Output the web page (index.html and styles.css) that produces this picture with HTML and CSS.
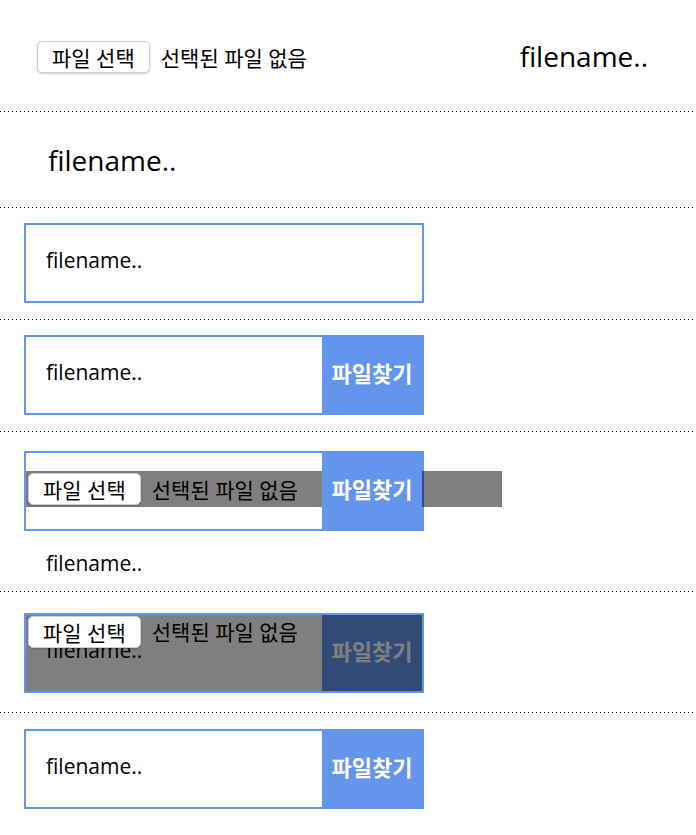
FILE: index.html
```html
<!DOCTYPE html>
<html lang="ko">
<head>
    <meta charset="UTF-8">
    <meta name="viewport" content="width=device-width, initial-scale=1.0">
    <title>File input</title>
    <link rel="stylesheet" href="styles.css">
</head>
<body>
    <!-- native input + name -->
    <div class="demo demo-native">
        <div class="file-field">
            <span class="file-btn">파일 선택</span>
            <span class="file-text">선택된 파일 없음</span>
        </div>
        <span class="filename filename-lg">filename..</span>
    </div>

    <div class="demo demo-text">
        <span class="filename filename-lg">filename..</span>
    </div>

    <div class="demo demo-box">
        <div class="filebox">
            <span class="filename">filename..</span>
        </div>
    </div>

    <div class="demo demo-box">
        <div class="filebox">
            <span class="filename">filename..</span>
            <span class="find-btn">파일찾기</span>
        </div>
    </div>

    <!-- input shown under the label -->
    <div class="demo demo-strip">
        <div class="filebox">
            <span class="find-btn">파일찾기</span>
            <div class="file-field file-strip">
                <span class="file-btn">파일 선택</span>
                <span class="file-text">선택된 파일 없음</span>
            </div>
        </div>
        <div class="below">
            <span class="filename">filename..</span>
        </div>
    </div>

    <!-- input stretched over the box -->
    <div class="demo demo-cover">
        <div class="filebox">
            <span class="filename">filename..</span>
            <span class="find-btn">파일찾기</span>
            <div class="file-field file-cover">
                <span class="file-btn">파일 선택</span>
                <span class="file-text">선택된 파일 없음</span>
            </div>
        </div>
    </div>

    <div class="demo demo-last">
        <div class="filebox">
            <span class="filename">filename..</span>
            <span class="find-btn">파일찾기</span>
        </div>
    </div>
</body>
</html>
```

FILE: styles.css
```css
body {
    margin: 0;
    font-family: "Open Sans", "Noto Sans CJK KR", sans-serif;
    color: #000;
    background-color: #fff;
}
.demo {
    box-sizing: border-box;
    padding-bottom: 1px;
    background: linear-gradient(to right, #000 1px, transparent 1px) left bottom / 4px 1px repeat-x;
}
.demo-native {
    display: flex;
    align-items: center;
    height: 112px;
    padding: 3px 48px 1px 37px;
}
.demo-text {
    display: flex;
    align-items: center;
    height: 96px;
    padding-left: 48px;
}
.demo-box {
    padding: 15px 0 17px 24px;
}
.demo-strip {
    padding: 19px 0 1px 24px;
}
.demo-cover {
    padding: 21px 0 20px 24px;
}
.demo-last {
    padding: 16px 0 0 24px;
    background: none;
}
.filename {
    font-size: 21px;
    line-height: 1;
}
.filename-lg {
    font-size: 28px;
}
.demo-native .filename-lg {
    margin-left: auto;
    margin-bottom: 3px;
}
.filebox {
    position: relative;
    box-sizing: border-box;
    display: flex;
    align-items: center;
    width: 400px;
    height: 80px;
    padding: 0 0 5px 20px;
    border: 2px solid #6495ed;
}
.find-btn {
    position: absolute;
    top: -2px;
    right: 0;
    box-sizing: border-box;
    display: flex;
    align-items: center;
    justify-content: center;
    width: 100px;
    height: 80px;
    padding-bottom: 4px;
    background-color: #6495ed;
    color: #fff;
    font-size: 22px;
    font-weight: bold;
    line-height: 1;
}
.file-field {
    display: flex;
    align-items: center;
    font-size: 21px;
}
.file-btn {
    box-sizing: border-box;
    display: flex;
    align-items: center;
    height: 32px;
    padding: 0 14px;
    background-color: #fff;
    border: 1px solid #cfcfcf;
    border-radius: 5px;
    box-shadow: 0 1px 2px rgba(0, 0, 0, 0.2);
}
.file-text {
    margin-left: 11px;
}
.file-strip {
    position: absolute;
    top: 18px;
    left: 0;
    z-index: 1;
    width: 476px;
    height: 36px;
    padding-left: 2px;
    box-sizing: border-box;
    background-color: rgba(0, 0, 0, 0.5);
}
.demo-strip .find-btn {
    z-index: 2;
}
.file-cover {
    position: absolute;
    top: 0;
    left: 0;
    right: 0;
    bottom: 0;
    align-items: flex-start;
    padding: 1px 2px;
    background-color: rgba(0, 0, 0, 0.5);
}
.below {
    display: flex;
    align-items: center;
    height: 60px;
    padding: 5px 0 0 22px;
    box-sizing: border-box;
}
```
